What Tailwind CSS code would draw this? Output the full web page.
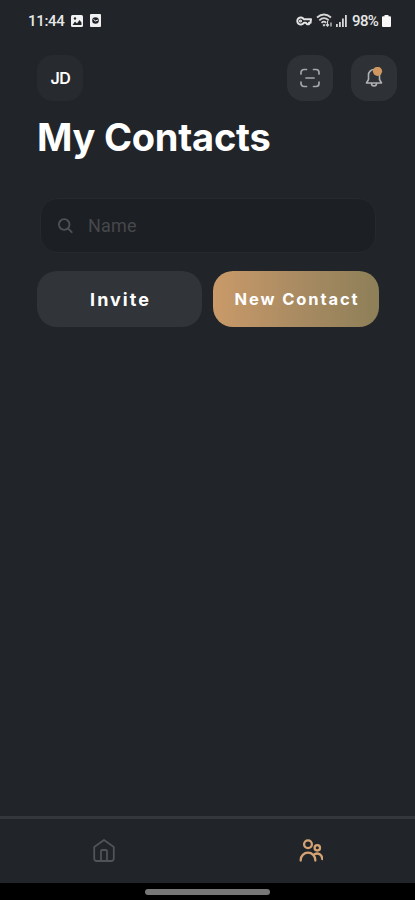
<!DOCTYPE html>
<html lang="en">
<head>
    <meta charset="UTF-8">
    <meta name="viewport" content="width=device-width, initial-scale=1.0">
    <title>My Contacts</title>
    <script src="https://cdn.jsdelivr.net/npm/@tailwindcss/browser@4"></script>
</head>
<body class="bg-[#212529] font-['Inter',sans-serif] text-white">
    <div class="flex h-[900px] w-[415px] flex-col overflow-hidden">

        <!-- Status bar -->
        <div class="flex h-[41px] items-center justify-between pl-7 pr-6 font-['Roboto',sans-serif] text-[15px] font-medium text-[#e8e8e8]">
            <div class="flex items-center">
                <span class="w-[43px] pt-px tracking-[-0.3px]">11:44</span>
                <svg class="h-3 w-3" viewBox="0 0 12 12">
                    <rect width="12" height="12" rx="1.5" fill="#f1f1f1"/>
                    <path d="M1.5 10 4 6.5 6 8.5 8.5 5l2 2.500V10z" fill="#212529"/>
                    <circle cx="4" cy="3.500" r="1.200" fill="#212529"/>
                </svg>
                <svg class="ml-[7px] h-[13px] w-[11px]" viewBox="0 0 11 13">
                    <rect width="11" height="13" rx="1" fill="#f1f1f1"/>
                    <circle cx="5.500" cy="6.500" r="3.300" fill="#212529"/>
                    <path d="M3.500 5.500 5.500 7l2.500-1" fill="none" stroke="#f1f1f1"/>
                </svg>
            </div>
            <div class="flex items-center">
                <svg class="h-[10px] w-4" viewBox="0 0 16 10" fill="none" stroke="#e4e4e4" stroke-width="2">
                    <path d="M7.800 3.200A3.500 3.500 0 1 0 7.800 6.800H10l1 1.400h2V6.800h1.500L15 3.200z" stroke-linejoin="round"/>
                    <circle cx="4.500" cy="5" r=".6" fill="#e4e4e4"/>
                </svg>
                <svg class="ml-1 h-[15px] w-[17px]" viewBox="0 0 17 15" fill="none" stroke="#d6d6d6" stroke-width="1.800">
                    <path d="M1 4.500Q8 -1.500 15 4.500M3.300 7.300Q8 3 12.700 7.300M5.500 9.800Q8 7.500 10 9.800"/>
                    <path d="M7 11.500 8 12.700 9 11.500M11.500 8v5M10 11.500l1.500 1.700 1.500-1.700M15 13.500v-4" stroke-width="1.200"/>
                </svg>
                <svg class="ml-[3px] h-3 w-[11px]" viewBox="0 0 11 12" fill="#d6d6d6">
                    <rect y="9" width="1.800" height="3"/>
                    <rect x="3" y="7" width="1.800" height="5"/>
                    <rect x="6" y="3.500" width="1.800" height="8.500"/>
                    <rect x="9" width="1.800" height="12"/>
                </svg>
                <span class="ml-[5px] w-[29px] pt-px tracking-[-0.6px]">98%</span>
                <svg class="ml-px h-3 w-[9px]" viewBox="0 0 9 12" fill="#f8f8f8">
                    <path d="M2.500 0h4v1.200H8a1 1 0 0 1 1 1V11a1 1 0 0 1-1 1H1a1 1 0 0 1-1-1V2.200a1 1 0 0 1 1-1h1.500z"/>
                </svg>
            </div>
        </div>

        <!-- Header -->
        <div class="mt-3.5 flex items-center pl-[37px] pr-[18px]">
            <div class="flex h-[46px] w-[46px] items-center justify-center rounded-2xl bg-[#272b2f] pb-px pl-px text-base font-semibold tracking-[-0.3px]">JD</div>
            <button class="ml-auto flex h-[46px] w-[46px] items-center justify-center rounded-2xl bg-[#2e3136]">
                <svg class="h-5 w-5" viewBox="0 0 20 20" fill="none" stroke="#a5a6a8" stroke-width="1.700" stroke-linecap="round">
                    <path d="M1 6V4.500A3 3 0 0 1 4 1.500h2.500M13.500 1.500H16a3 3 0 0 1 3 3V6M19 14v1.500a3 3 0 0 1-3 3h-2.500M6.500 18.500H4a3 3 0 0 1-3-3V14M6 10h8"/>
                </svg>
            </button>
            <button class="ml-[18px] flex h-[46px] w-[46px] items-center justify-center rounded-2xl bg-[#2e3136]">
                <svg class="h-[22px] w-5" viewBox="0 0 20 22" fill="none" stroke="#b0b1b3" stroke-width="1.600" stroke-linejoin="round" stroke-linecap="round">
                    <path d="M10 2.500a5.500 5.500 0 0 0-5.500 5.500v4.500L2.500 16h15l-2-3.500V8A5.500 5.500 0 0 0 10 2.500z"/>
                    <path d="M7.500 16.500a2.500 2.500 0 0 0 5 0"/>
                    <circle cx="13.500" cy="4.300" r="4.600" fill="#cf965f" stroke="none"/>
                </svg>
            </button>
        </div>

        <h1 class="ml-[37px] mt-3 text-[38px] leading-[48px] font-bold tracking-[-0.25px]">My Contacts</h1>

        <!-- Search -->
        <label class="ml-10 mt-[37px] flex h-[55px] w-[336px] items-center rounded-[18px] border border-[#252a30] bg-[#1c1f24] pl-4">
            <svg class="h-4 w-4" viewBox="0 0 16 16" fill="none" stroke="#505256" stroke-width="1.800" stroke-linecap="round">
                <circle cx="7.200" cy="6.500" r="5.300"/>
                <path d="m11.200 10.700 3.500 3.500"/>
            </svg>
            <input type="text" placeholder="Name" class="ml-[15px] w-60 bg-transparent font-['Roboto',sans-serif] text-lg tracking-[0.2px] outline-none placeholder:text-[#46484c]">
        </label>

        <!-- Actions -->
        <div class="ml-[37px] mt-[18px] flex gap-[11px]">
            <button class="h-14 w-[165px] rounded-[20px] bg-[#313439] pt-0.5 pl-0.5 text-lg font-bold tracking-[2px]">Invite</button>
            <button class="h-14 w-[166px] rounded-[20px] bg-linear-to-r from-[#ca9a69] via-[#aa8b62] to-[#8d7f58] pt-px pl-0.5 text-[16.5px] font-bold tracking-[1.900px] whitespace-nowrap">New Contact</button>
        </div>

        <!-- Bottom navigation -->
        <div class="mt-auto grid h-[67px] grid-cols-2 border-t-[3px] border-[#34373b]">
            <a href="#" class="flex items-center justify-center">
                <svg class="h-6 w-6" viewBox="0 0 24 24" fill="none" stroke="#505357" stroke-width="1.800" stroke-linejoin="round">
                    <path d="M2.200 8 12 1l9.800 7v11.500a2.500 2.500 0 0 1-2.500 2.500H4.700a2.500 2.500 0 0 1-2.500-2.500z"/>
                    <path d="M9 22V12a1 1 0 0 1 1-1h4a1 1 0 0 1 1 1v10"/>
                </svg>
            </a>
            <a href="#" class="flex items-center justify-center">
                <svg class="h-6 w-6" viewBox="0 0 24 24" fill="none" stroke="#d5a373" stroke-width="2.300" stroke-linecap="round">
                    <circle cx="9" cy="5.200" r="3.900"/>
                    <circle cx="18.300" cy="8.800" r="2.700"/>
                    <path d="M1.700 21.500v-.5a7.300 7.300 0 0 1 14.600 0v.5M15.500 15.200a5.200 5.200 0 0 1 7.700 4.800"/>
                </svg>
            </a>
        </div>
        <div class="flex h-[17px] justify-center bg-black pt-1.5">
            <div class="h-1.5 w-[125px] rounded-full bg-[#777777]"></div>
        </div>
    </div>
</body>
</html>
